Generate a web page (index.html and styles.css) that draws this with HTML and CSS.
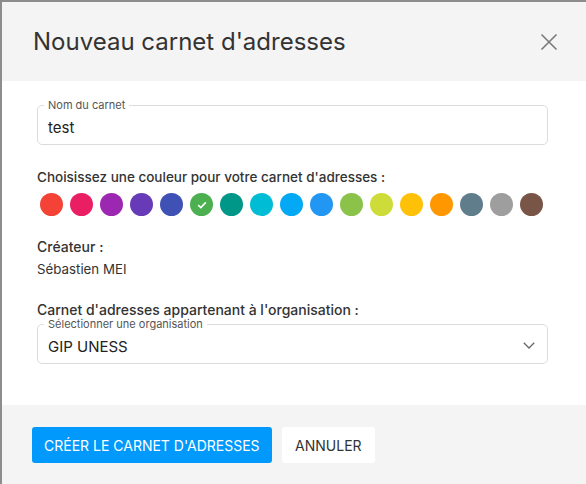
FILE: index.html
```html
<!DOCTYPE html>
<html lang="fr">
<head>
  <meta charset="UTF-8">
  <title>Nouveau carnet d'adresses</title>
  <link rel="stylesheet" href="styles.css">
</head>
<body>
  <div class="dialog">
    <div class="dialog-header">
      <h1>Nouveau carnet d'adresses</h1>
      <button class="close" aria-label="Fermer">
        <svg width="18" height="18" viewBox="0 0 18 18"><path d="M1.5 1.5 L16.5 16.5 M16.5 1.5 L1.5 16.5" stroke="#7a7a7a" stroke-width="1.6" fill="none"/></svg>
      </button>
    </div>

    <div class="dialog-body">
      <div class="field">
        <span class="field-label">Nom du carnet</span>
        <div class="field-value">test</div>
      </div>

      <div class="section-title first">Choisissez une couleur pour votre carnet d'adresses :</div>
      <div class="colors">
        <span class="dot" style="background:#f44336"></span>
        <span class="dot" style="background:#e91e63"></span>
        <span class="dot" style="background:#9c27b0"></span>
        <span class="dot" style="background:#673ab7"></span>
        <span class="dot" style="background:#3f51b5"></span>
        <span class="dot selected" style="background:#4caf50">
          <svg width="10" height="8" viewBox="0 0 10 8"><path d="M1.2 4.2 L3.8 6.6 L8.8 1.4" stroke="#fff" stroke-width="1.6" fill="none"/></svg>
        </span>
        <span class="dot" style="background:#009688"></span>
        <span class="dot" style="background:#00bcd4"></span>
        <span class="dot" style="background:#03a9f4"></span>
        <span class="dot" style="background:#2196f3"></span>
        <span class="dot" style="background:#8bc34a"></span>
        <span class="dot" style="background:#cddc39"></span>
        <span class="dot" style="background:#ffc107"></span>
        <span class="dot" style="background:#ff9800"></span>
        <span class="dot" style="background:#607d8b"></span>
        <span class="dot" style="background:#9e9e9e"></span>
        <span class="dot" style="background:#795548"></span>
      </div>

      <div class="section-title">Créateur :</div>
      <div class="creator">Sébastien MEI</div>

      <div class="section-title">Carnet d'adresses appartenant à l'organisation :</div>
      <div class="field select">
        <span class="field-label">Sélectionner une organisation</span>
        <div class="field-value">GIP UNESS</div>
        <svg class="chevron" width="12" height="7" viewBox="0 0 12 7"><path d="M0.8 0.8 L6 6 L11.2 0.8" stroke="#666" stroke-width="1.3" fill="none"/></svg>
      </div>
    </div>

    <div class="dialog-footer">
      <button class="btn primary">Créer le carnet d'adresses</button>
      <button class="btn cancel">Annuler</button>
    </div>
  </div>
</body>
</html>
```

FILE: styles.css
```css
body {
  margin: 0;
  background: #8d8d8d;
  font-family: Inter, 'Noto Sans', sans-serif;
  color: #333;
  overflow: hidden;
}
.dialog {
  margin: 2px 0 0 2px;
  height: 482px;
  background: #fff;
  display: flex;
  flex-direction: column;
}
.dialog-header {
  height: 79px;
  background: #f4f4f4;
  display: flex;
  align-items: center;
  justify-content: space-between;
  padding: 0 28px 0 31px;
}
h1 {
  margin: 0;
  font-size: 24px;
  font-weight: 400;
  color: #333;
}
.close {
  border: none;
  background: none;
  padding: 0;
  display: flex;
  cursor: pointer;
}
.dialog-body {
  flex: 1;
  padding: 24px 38px 0 35px;
}
.field {
  position: relative;
  height: 40px;
  border: 1px solid #dcdcdc;
  border-radius: 5px;
  box-sizing: border-box;
  display: flex;
  align-items: center;
  padding: 4px 10px 0 10px;
}
.field-label {
  position: absolute;
  top: -7px;
  left: 6px;
  padding: 0 4px;
  background: #fff;
  font-size: 11px;
  line-height: 13px;
  color: #555;
}
.field-value {
  font-size: 15px;
  color: #222;
}
.select .chevron {
  position: absolute;
  right: 12px;
  top: 17px;
}
.section-title {
  font-size: 14px;
  font-weight: 500;
  line-height: 20px;
  margin-top: 21px;
  color: #333;
}
.section-title.first {
  margin-top: 22px;
  font-size: 13.5px;
}
.colors {
  display: flex;
  gap: 7px;
  margin-top: 6px;
  padding-left: 3px;
}
.dot {
  width: 23px;
  height: 23px;
  border-radius: 50%;
  display: flex;
  align-items: center;
  justify-content: center;
}
.creator {
  font-size: 13.3px;
  line-height: 20px;
  margin-top: 2px;
  color: #333;
}
.select {
  margin-top: 4px;
}
.dialog-footer {
  height: 79px;
  background: #f4f4f4;
  display: flex;
  align-items: flex-start;
  gap: 10px;
  padding: 22px 30px 0 30px;
  box-sizing: border-box;
}
.btn {
  height: 36px;
  padding: 0 12px;
  border: none;
  border-radius: 3px;
  background: #fff;
  color: #333;
  font-family: Inter, 'Noto Sans', sans-serif;
  font-size: 14px;
  text-transform: uppercase;
  cursor: pointer;
}
.btn.cancel {
  padding: 0 13.5px;
}
.btn.primary {
  background: #0199fb;
  color: #fff;
}
```
